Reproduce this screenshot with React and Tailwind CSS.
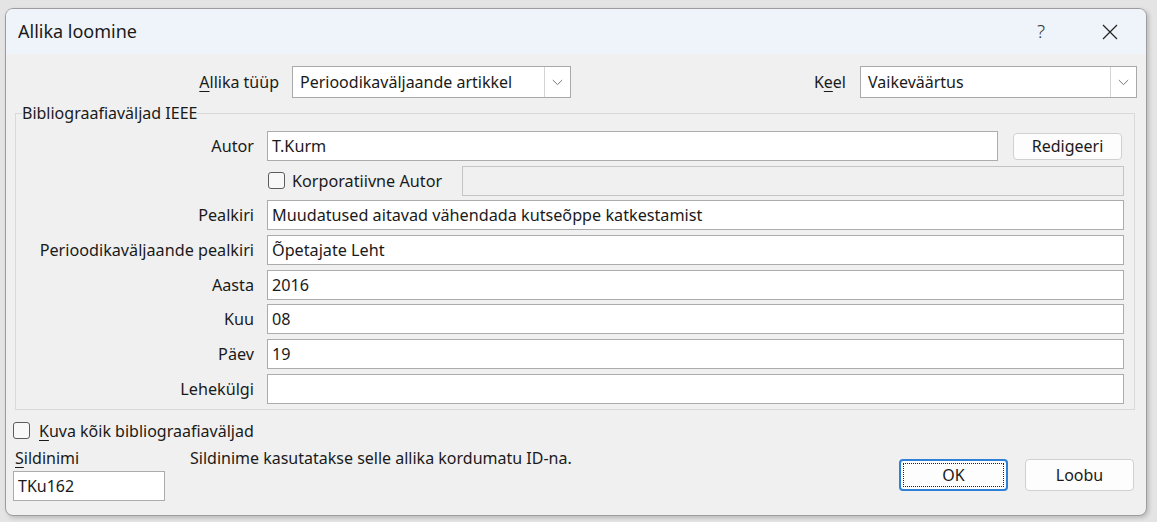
import React from "react";

const font = { fontFamily: '"Noto Sans", "Open Sans", sans-serif' };

function Chevron() {
  return (
    <svg width="11" height="7" viewBox="0 0 11 7" fill="none">
      <path d="M0.8 1 L5.5 5.6 L10.2 1" stroke="#7a7a7a" strokeWidth="1" />
    </svg>
  );
}

function Select({ value, w }) {
  return (
    <div className={`flex h-[32px] items-stretch border border-[#a9a9a9] bg-white ${w}`}>
      <div className="flex flex-1 items-center pl-[7px] text-[16px] text-[#1a1a1a]">{value}</div>
      <div className="flex w-[26px] items-center justify-center border-l border-[#d4d4d4] bg-white">
        <Chevron />
      </div>
    </div>
  );
}

function Input({ value = "", className = "" }) {
  return (
    <div className={`flex h-[30px] items-center border border-[#acacac] bg-white pl-[4px] text-[16.2px] text-[#1a1a1a] ${className}`}>
      {value}
    </div>
  );
}

function Checkbox() {
  return <div className="h-[17px] w-[17px] shrink-0 rounded-[3px] border border-[#5c5c5c] bg-[#f8f8f8]" />;
}

function Label({ children }) {
  return <div className="flex h-[30px] items-center justify-end text-[16.2px] text-[#1a1a1a]">{children}</div>;
}

export default function App() {
  return (
    <div className="h-[522px] w-[1157px] overflow-hidden bg-[#e4e4e4] pl-[5px] pt-[8px]" style={font}>
      <div className="flex h-[508px] w-[1142px] flex-col overflow-hidden rounded-[8px] border border-[#9d9d9d] bg-[#f0f0f0] shadow-[2px_2px_4px_rgba(0,0,0,0.18)]">
        {/* Title bar */}
        <div className="flex h-[45px] shrink-0 items-center bg-[#eef4f9]">
          <div className="pl-[12px] text-[18px] text-[#1a1a1a]">Allika loomine</div>
          <div className="flex-1" />
          <div className="mr-[57px] text-[19px] font-light text-[#333]">?</div>
          <div className="mr-[28px] flex items-center">
            <svg width="16" height="16" viewBox="0 0 16 16">
              <path d="M1 1 L15 15 M15 1 L1 15" stroke="#222" strokeWidth="1.2" />
            </svg>
          </div>
        </div>

        {/* Body */}
        <div className="flex flex-1 flex-col px-[7px]">
          {/* Row 1 */}
          <div className="mt-[12px] flex items-center">
            <div className="w-[266px] text-right text-[16px] text-[#1a1a1a]">
              <span className="underline underline-offset-[3px]">A</span>llika tüüp
            </div>
            <div className="ml-[13px]">
              <Select value="Perioodikaväljaande artikkel" w="w-[279px]" />
            </div>
            <div className="flex-1" />
            <div className="text-[16px] text-[#1a1a1a]">
              K<span className="underline underline-offset-[3px]">e</span>el
            </div>
            <div className="ml-[14px] mr-[2px]">
              <Select value="Vaikeväärtus" w="w-[277px]" />
            </div>
          </div>

          {/* Fieldset */}
          <fieldset className="ml-[2px] mr-[4px] mt-[4px] border border-[#d9d9d9] pb-[5px] pr-[10px]">
            <legend className="ml-[6px] px-0 text-[16px] leading-[22px] text-[#1a1a1a]">Bibliograafiaväljad IEEE</legend>
            <div className="mt-[7px] grid grid-cols-[238px_1fr] gap-x-[13px] gap-y-[4.7px]">
              <Label>Autor</Label>
              <div className="flex items-center">
                <Input value="T.Kurm" className="flex-1" />
                <div className="ml-[15px] mr-[2px] flex h-[27px] w-[109px] items-center justify-center rounded-[4px] border border-[#d0d0d0] bg-[#fdfdfd] text-[16px] text-[#1a1a1a]">
                  Redigeeri
                </div>
              </div>

              <div />
              <div className="flex h-[30px] items-center">
                <div className="ml-[1px]">
                  <Checkbox />
                </div>
                <div className="ml-[7px] w-[170px] text-[16.2px] text-[#1a1a1a]">Korporatiivne Autor</div>
                <div className="h-[30px] flex-1 border border-[#c4c4c4] bg-[#f0f0f0]" />
              </div>

              <Label>Pealkiri</Label>
              <Input value="Muudatused aitavad vähendada kutseõppe katkestamist" />

              <Label>Perioodikaväljaande pealkiri</Label>
              <Input value="Õpetajate Leht" />

              <Label>Aasta</Label>
              <Input value="2016" />

              <Label>Kuu</Label>
              <Input value="08" />

              <Label>Päev</Label>
              <Input value="19" />

              <Label>Lehekülgi</Label>
              <Input value="" />
            </div>
          </fieldset>

          {/* Kuva */}
          <div className="mt-[10px] flex h-[22px] items-center">
            <Checkbox />
            <div className="ml-[9px] text-[16px] text-[#1a1a1a]">
              <span className="underline underline-offset-[3px]">K</span>uva kõik bibliograafiaväljad
            </div>
          </div>

          {/* Bottom */}
          <div className="mt-[5px] flex items-start">
            <div className="flex w-[152px] flex-col">
              <div className="flex h-[22px] items-center pl-[2px] text-[16px] text-[#1a1a1a]">
                <span className="underline underline-offset-[3px]">S</span>ildinimi
              </div>
              <div className="mt-[2px] flex h-[30px] items-center border border-[#acacac] bg-white pl-[4px] text-[16px] text-[#1a1a1a]">
                TKu162
              </div>
            </div>
            <div className="ml-[25px] flex h-[22px] items-center text-[16px] text-[#1a1a1a]">
              Sildinime kasutatakse selle allika kordumatu ID-na.
            </div>
            <div className="flex-1" />
            <div className="mt-[12px] flex items-center gap-[17px] pr-[5px]">
              <div className="flex h-[32px] w-[109px] items-center justify-center rounded-[4px] border-2 border-[#2e7fd6] bg-[#fdfdfd] p-[2px]">
                <div className="flex h-full w-full items-center justify-center border border-dotted border-[#222] text-[16px] text-[#1a1a1a]">
                  OK
                </div>
              </div>
              <div className="flex h-[32px] w-[109px] items-center justify-center rounded-[4px] border border-[#d0d0d0] bg-[#fdfdfd] text-[16px] text-[#1a1a1a]">
                Loobu
              </div>
            </div>
          </div>
        </div>
      </div>
    </div>
  );
}
